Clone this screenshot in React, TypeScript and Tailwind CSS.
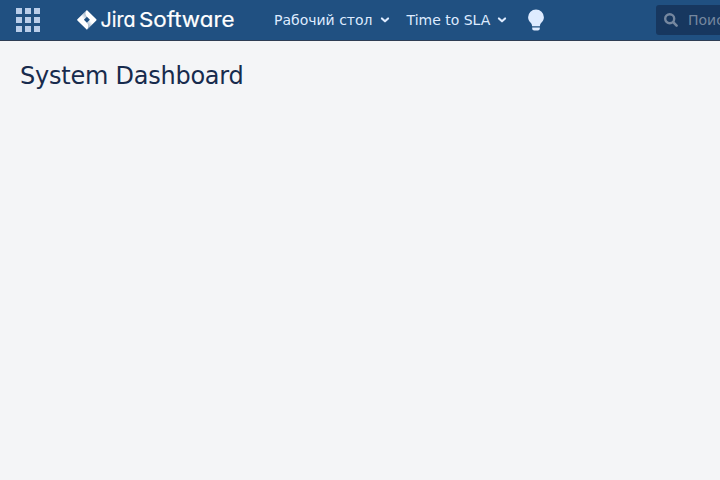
import React from "react";

const GRID = [0, 9, 18];

function AppSwitcher() {
  return (
    <svg width="24" height="24" viewBox="0 0 24 24" className="fill-[#b9cde9]">
      {GRID.map((y) => GRID.map((x) => <rect key={`${x}-${y}`} x={x} y={y} width="6" height="6" />))}
    </svg>
  );
}

function JiraLogo() {
  return (
    <svg width="160" height="30" viewBox="0 0 160 30" className="ml-9">
      <defs>
        <linearGradient id="up" x1="0.9" y1="0.1" x2="0.3" y2="0.8">
          <stop offset="0.2" stopColor="#205081" stopOpacity="0.5" />
          <stop offset="1" stopColor="#205081" stopOpacity="0" />
        </linearGradient>
        <linearGradient id="down" x1="0.1" y1="0.9" x2="0.7" y2="0.2">
          <stop offset="0.2" stopColor="#205081" stopOpacity="0.5" />
          <stop offset="1" stopColor="#205081" stopOpacity="0" />
        </linearGradient>
      </defs>
      <path
        fill="#fff"
        fillRule="evenodd"
        d="M10.9 5 20.3 14.2a.9.9 0 0 1 0 1.2L10.9 24.7 1.4 15.4a.9.9 0 0 1 0-1.2ZM10.9 11.8 7.9 14.8 10.9 17.8 13.9 14.8Z"
      />
      <path fill="url(#up)" d="M10.9 5a5 5 0 0 0 0 6.8L7.9 14.8 4.6 11.2Z" />
      <path fill="url(#down)" d="M10.9 24.7a5 5 0 0 0 0-6.9L13.9 14.8 17.2 18.4Z" />
      <g className="fill-white stroke-white font-['Inter',sans-serif] text-[20.5px] font-normal [font-feature-settings:'cv11','ss03'] [stroke-width:0.2px]">
        <text x="24.5" y="22" textLength="35" lengthAdjust="spacingAndGlyphs">
          Jira
        </text>
        <text x="63" y="22" textLength="95.500" lengthAdjust="spacingAndGlyphs">
          Software
        </text>
      </g>
    </svg>
  );
}

function Chevron() {
  return (
    <svg width="10" height="8" viewBox="0 0 10 8" fill="none" className="stroke-[#deebff]">
      <path d="M1.900 2.400 5 5.300 8.100 2.400" strokeWidth="2.100" strokeLinecap="round" strokeLinejoin="round" />
    </svg>
  );
}

function NavItem({ label }: { label: string }) {
  return (
    <div className="flex items-center gap-[7px] whitespace-nowrap">
      <span>{label}</span>
      <Chevron />
    </div>
  );
}

function Bulb() {
  return (
    <svg width="16" height="22" viewBox="0 0 16 22" className="ml-[21px] fill-[#deebff]">
      <path d="M8 .4a7.900 7.900 0 0 1 7.900 7.800c0 2.600-1.300 4.200-2.600 5.600-.9 1-1.300 1.900-1.400 3.400H4.100c-.1-1.500-.5-2.400-1.400-3.400C1.400 12.400.1 10.800.1 8.200A7.900 7.900 0 0 1 8 .4Z" />
      <path d="M4.200 18.400h7.600v1.200c0 1.200-.8 1.900-2 1.900H6.200c-1.200 0-2-.7-2-1.900Z" />
    </svg>
  );
}

function Search() {
  return (
    <div className="ml-auto flex h-[30px] w-16 items-center overflow-hidden rounded-l-[3px] bg-[#17375f] pl-2 text-[#75879f]">
      <svg width="14" height="14" viewBox="0 0 14 14" fill="none" stroke="currentColor" className="shrink-0">
        <circle cx="5.700" cy="5.700" r="4.500" strokeWidth="2.400" />
        <path d="M9.200 9.200 12.600 12.600" strokeWidth="2.600" strokeLinecap="round" />
      </svg>
      <span className="ml-[10px] whitespace-nowrap">Поиск</span>
    </div>
  );
}

export default function App() {
  return (
    <div className="h-screen overflow-hidden bg-[#f4f5f7] font-['DejaVu_Sans',sans-serif]">
      <header className="flex h-[41px] items-center border-b border-[#2e3d54] bg-[#205081] pl-4 text-sm text-[#deebff]">
        <AppSwitcher />
        <JiraLogo />
        <nav className="ml-[38px] flex items-center gap-[17px]">
          <NavItem label="Рабочий стол" />
          <NavItem label="Time to SLA" />
        </nav>
        <Bulb />
        <Search />
      </header>
      <main className="px-5 pt-[21px]">
        <h1 className="text-2xl leading-7 tracking-[-0.01em] text-[#172b4d]">System Dashboard</h1>
      </main>
    </div>
  );
}
